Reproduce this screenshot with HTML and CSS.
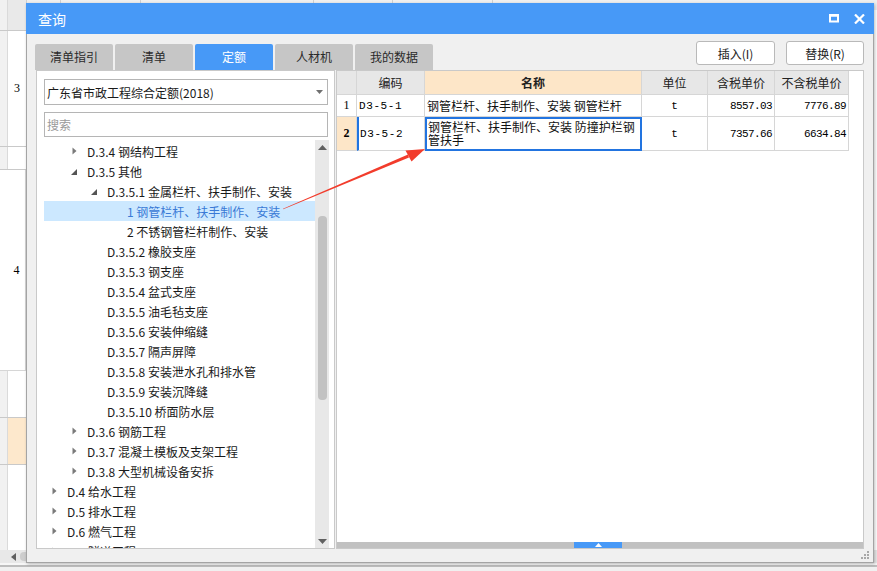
FILE: index.html
```html
<!DOCTYPE html>
<html lang="zh-CN">
<head>
<meta charset="utf-8">
<title>查询</title>
<link rel="stylesheet" href="styles.css">
</head>
<body>
<div class="sheet">
  <div class="sheet-main">
    <div class="sheet-left">
      <div class="srow h"><span class="edge"></span><span class="num"></span></div>
      <div class="srow a"><span class="edge"></span><span class="num">3</span></div>
      <div class="srow b"><span class="edge"></span><span class="num"></span></div>
      <div class="srow c"><span class="edge"></span><span class="num">4</span></div>
      <div class="srow d"><span class="edge"></span><span class="num"></span></div>
      <div class="srow e"><span class="edge"></span><span class="num"></span></div>
      <div class="srow f"><span class="edge"></span><span class="num"></span></div>
    </div>
    <div class="sheet-grid">
      <div class="sheet-head">
        <span class="sh w1"></span><span class="sh w2"></span><span class="sh w3"></span><span class="sh w4"></span><span class="sh w5"></span>
      </div>
    </div>
  </div>
  <div class="sheet-hscroll">
    <svg class="hs-left" width="5" height="8" viewBox="0 0 5 8"><path d="M5 0V8L0 4Z" fill="#606060"/></svg>
    <span class="hs-thumb"></span>
  </div>
  <div class="sheet-status"></div>
</div>

<div class="dialog">
  <div class="titlebar">
    <span class="title">查询</span>
    <span class="tb-icons">
      <svg width="10" height="9" viewBox="0 0 10 9"><rect x="1" y="1.5" width="8" height="6" fill="none" stroke="#fff" stroke-width="2"/><rect x="0" y="0" width="10" height="2.5" fill="#fff"/></svg>
      <svg width="11" height="10" viewBox="0 0 11 10"><path d="M1 0.5L10 9.5M10 0.5L1 9.5" stroke="#fff" stroke-width="2.2"/></svg>
    </span>
  </div>
  <div class="dlg-body">
    <div class="toolbar">
      <div class="tabs">
        <div class="tab">清单指引</div>
        <div class="tab">清单</div>
        <div class="tab active">定额</div>
        <div class="tab">人材机</div>
        <div class="tab">我的数据</div>
      </div>
      <div class="buttons">
        <div class="btn b1">插入(I)</div>
        <div class="btn b2">替换(R)</div>
      </div>
    </div>
    <div class="panels">
      <div class="left-panel">
        <div class="select">
          <span>广东省市政工程综合定额(2018)</span>
          <svg width="7" height="4" viewBox="0 0 7 4"><path d="M0 0H7L3.5 4Z" fill="#707070"/></svg>
        </div>
        <div class="search">搜索</div>
        <div class="tree-wrap">
          <div class="tree">
            <div class="row l2"><span class="tw"><svg width="5" height="8" viewBox="0 0 5 8"><path d="M0.5 0.5L4.5 4L0.5 7.5Z" fill="#7a7a7a"/></svg></span>D.3.4 钢结构工程</div>
            <div class="row l2"><span class="tw ex"><svg width="6" height="6" viewBox="0 0 6 6"><path d="M6 0V6H0Z" fill="#555"/></svg></span>D.3.5 其他</div>
            <div class="row l3"><span class="tw ex"><svg width="6" height="6" viewBox="0 0 6 6"><path d="M6 0V6H0Z" fill="#555"/></svg></span>D.3.5.1 金属栏杆、扶手制作、安装</div>
            <div class="row l4 sel"><span class="tw"></span>1 钢管栏杆、扶手制作、安装</div>
            <div class="row l4"><span class="tw"></span>2 不锈钢管栏杆制作、安装</div>
            <div class="row l3"><span class="tw"></span>D.3.5.2 橡胶支座</div>
            <div class="row l3"><span class="tw"></span>D.3.5.3 钢支座</div>
            <div class="row l3"><span class="tw"></span>D.3.5.4 盆式支座</div>
            <div class="row l3"><span class="tw"></span>D.3.5.5 油毛毡支座</div>
            <div class="row l3"><span class="tw"></span>D.3.5.6 安装伸缩缝</div>
            <div class="row l3"><span class="tw"></span>D.3.5.7 隔声屏障</div>
            <div class="row l3"><span class="tw"></span>D.3.5.8 安装泄水孔和排水管</div>
            <div class="row l3"><span class="tw"></span>D.3.5.9 安装沉降缝</div>
            <div class="row l3"><span class="tw"></span>D.3.5.10 桥面防水层</div>
            <div class="row l2"><span class="tw"><svg width="5" height="8" viewBox="0 0 5 8"><path d="M0.5 0.5L4.5 4L0.5 7.5Z" fill="#7a7a7a"/></svg></span>D.3.6 钢筋工程</div>
            <div class="row l2"><span class="tw"><svg width="5" height="8" viewBox="0 0 5 8"><path d="M0.5 0.5L4.5 4L0.5 7.5Z" fill="#7a7a7a"/></svg></span>D.3.7 混凝土模板及支架工程</div>
            <div class="row l2"><span class="tw"><svg width="5" height="8" viewBox="0 0 5 8"><path d="M0.5 0.5L4.5 4L0.5 7.5Z" fill="#7a7a7a"/></svg></span>D.3.8 大型机械设备安拆</div>
            <div class="row l1"><span class="tw"><svg width="5" height="8" viewBox="0 0 5 8"><path d="M0.5 0.5L4.5 4L0.5 7.5Z" fill="#7a7a7a"/></svg></span>D.4 给水工程</div>
            <div class="row l1"><span class="tw"><svg width="5" height="8" viewBox="0 0 5 8"><path d="M0.5 0.5L4.5 4L0.5 7.5Z" fill="#7a7a7a"/></svg></span>D.5 排水工程</div>
            <div class="row l1"><span class="tw"><svg width="5" height="8" viewBox="0 0 5 8"><path d="M0.5 0.5L4.5 4L0.5 7.5Z" fill="#7a7a7a"/></svg></span>D.6 燃气工程</div>
            <div class="row l1"><span class="tw"><svg width="5" height="8" viewBox="0 0 5 8"><path d="M0.5 0.5L4.5 4L0.5 7.5Z" fill="#7a7a7a"/></svg></span>D.7 隧道工程</div>
          </div>
          <div class="vscroll">
            <div class="vs-btn"><svg width="9" height="5" viewBox="0 0 9 5"><path d="M0 5H9L4.5 0Z" fill="#606060"/></svg></div>
            <div class="vs-thumb"></div>
            <div class="vs-btn down"><svg width="9" height="5" viewBox="0 0 9 5"><path d="M0 0H9L4.5 5Z" fill="#606060"/></svg></div>
          </div>
        </div>
      </div>
      <div class="right-panel">
        <div class="grid">
          <div class="c hd"></div>
          <div class="c hd">编码</div>
          <div class="c hd name-hd">名称</div>
          <div class="c hd">单位</div>
          <div class="c hd">含税单价</div>
          <div class="c hd">不含税单价</div>

          <div class="c no">1</div>
          <div class="c code">D3-5-1</div>
          <div class="c name">钢管栏杆、扶手制作、安装 钢管栏杆</div>
          <div class="c unit">t</div>
          <div class="c price">8557.03</div>
          <div class="c price">7776.89</div>

          <div class="c no cur">2</div>
          <div class="c code cur">D3-5-2</div>
          <div class="c name editing">钢管栏杆、扶手制作、安装 防撞护栏钢管扶手</div>
          <div class="c unit">t</div>
          <div class="c price">7357.66</div>
          <div class="c price">6634.84</div>
        </div>
        <div class="hscroll">
          <div class="hs-btn"><svg width="7" height="4" viewBox="0 0 7 4"><path d="M0 4H7L3.5 0Z" fill="#fff"/></svg></div>
        </div>
      </div>
    </div>
    <svg class="grip" width="8" height="8" viewBox="0 0 8 8">
      <rect x="6" y="0" width="2" height="2" fill="#a8a8a8"/>
      <rect x="3" y="3" width="2" height="2" fill="#a8a8a8"/>
      <rect x="6" y="3" width="2" height="2" fill="#a8a8a8"/>
      <rect x="0" y="6" width="2" height="2" fill="#a8a8a8"/>
      <rect x="3" y="6" width="2" height="2" fill="#a8a8a8"/>
      <rect x="6" y="6" width="2" height="2" fill="#a8a8a8"/>
    </svg>
  </div>
</div>

<svg class="arrow" width="877" height="571" viewBox="0 0 877 571">
  <polygon points="283,208.8 283.2,209.3 409,157.4 408,154.6" fill="#f23c2c"/>
  <polygon points="425,149 405.5,150.5 411.5,161.5" fill="#f23c2c"/>
</svg>
</body>
</html>
```
FILE: styles.css
```css
* { box-sizing: border-box; }
html, body { margin: 0; padding: 0; }
body {
  width: 877px;
  height: 571px;
  overflow: hidden;
  position: relative;
  background: #fff;
  font-family: "Noto Sans CJK SC", "Noto Sans", sans-serif;
  font-size: 12px;
  color: #1a1a1a;
}

/* backdrop spreadsheet */
.sheet { display: flex; flex-direction: column; height: 571px; }
.sheet-main { display: flex; height: 550px; }
.sheet-left { width: 26px; display: flex; flex-direction: column; }
.srow { display: flex; border-bottom: 1px solid #c9c9c9; }
.srow .edge { width: 8px; background: #f1f1f1; border-right: 1px solid #dadada; }
.srow .num {
  flex: 1; display: flex; align-items: center; justify-content: center;
  font-family: "Liberation Serif", serif; font-size: 12px; color: #000; background: #fff;
}
.srow.h { height: 31px; }
.srow.h .num { background: #e9e9e9; }
.srow.a { height: 116px; }
.srow.b { height: 23px; }
.srow.c { height: 201px; }
.srow.d { height: 47px; }
.srow.e { height: 47px; }
.srow.e .num { background: #fde8cc; }
.srow.f { flex: 1; border-bottom: none; }
.sheet-grid { flex: 1; background: #fff; border-left: 1px solid #d0d0d0; }
.sheet-head { display: flex; height: 10px; background: #efefef; }
.sh { border-right: 1px solid #cfcfcf; }
.w1 { width: 34px; } .w2 { width: 80px; } .w3 { width: 173px; } .w4 { width: 79px; } .w5 { width: 100px; }
.sheet-hscroll {
  height: 13px; background: #e8e8e8; display: flex; align-items: center;
  padding-left: 11px; gap: 4px;
}
.hs-thumb { width: 40px; height: 9px; border-radius: 4px; background: #cdcdcd; }
.sheet-status {
  flex: 1;
  background: linear-gradient(#f6f6f6 0 2px, #bdbdbd 2px 4px, #f0f0f0 4px);
}

/* dialog window */
.dialog {
  position: absolute;
  left: 26px; top: 3px;
  width: 848px; height: 560px;
  background: #f0f0f0;
  border: 1px solid #a4a4a4;
  border-top: none;
  box-shadow: 1px 1px 3px rgba(0,0,0,.25);
  display: flex; flex-direction: column;
}
.titlebar {
  height: 32px; background: #4799f7; margin: 0 -1px;
  display: flex; align-items: center; padding: 0 9px 0 12px; color: #fff;
}
.title { flex: 1; font-size: 14px; }
.tb-icons { display: flex; align-items: center; gap: 15px; }

.dlg-body {
  flex: 1; display: flex; flex-direction: column;
  padding: 0 9px 13px 8px; position: relative;
}
.toolbar { height: 36px; display: flex; justify-content: space-between; align-items: flex-end; }
.tabs { display: flex; gap: 2px; }
.tab {
  width: 78px; height: 26px; background: #c6c6c6; border-radius: 2px 2px 0 0;
  text-align: center; line-height: 26px; color: #2a2a2a;
}
.tab.active { background: #4799f7; color: #fff; }
.buttons { display: flex; gap: 11px; margin-bottom: 5px; }
.btn {
  height: 24px; background: #fff; border: 1px solid #b9b9b9; border-radius: 3px;
  display: flex; align-items: center; justify-content: center; color: #222;
}
.b1 { width: 79px; }
.b2 { width: 78px; }

.panels { height: 479px; display: flex; gap: 1px; padding-left: 1px; }

.left-panel {
  width: 299px; background: #fff; border: 1px solid #c9c9c9;
  display: flex; flex-direction: column; padding: 8px 0 0 7px;
}
.select {
  width: 284px; height: 26px; border: 1px solid #b5b5b5;
  display: flex; align-items: center; justify-content: space-between;
  padding: 0 4px 0 2px; color: #1a1a1a;
}
.search {
  width: 284px; height: 25px; border: 1px solid #b5b5b5; margin-top: 7px;
  display: flex; align-items: center; padding-left: 2px; color: #9a9a9a;
}
.tree-wrap { margin-top: 3px; flex: 1; min-height: 0; width: 285px; display: flex; overflow: hidden; }
.tree { width: 271px; padding-top: 1px; overflow: hidden; }
.row { height: 20px; display: flex; align-items: center; white-space: nowrap; color: #1a1a1a; }
.row.l1 { padding-left: 8px; }
.row.l2 { padding-left: 28px; }
.row.l3 { padding-left: 48px; }
.row.l4 { padding-left: 68px; }
.row.sel { background: #cce8ff; color: #3a7ad6; }
.tw { width: 15px; flex: none; display: flex; align-items: center; }
.tw.ex { padding-top: 2px; margin-left: -1px; margin-right: 1px; }
.vscroll { width: 14px; background: #e8e8e8; display: flex; flex-direction: column; align-items: center; }
.vs-btn { height: 14px; width: 14px; display: flex; align-items: center; justify-content: center; }
.vs-btn.down { margin-top: auto; }
.vs-thumb { width: 9px; height: 184px; margin-top: 62px; background: #c2c2c2; border-radius: 4px; }

.right-panel {
  width: 528px; background: #fff; border: 1px solid #c9c9c9;
  display: flex; flex-direction: column;
}
.grid {
  display: grid;
  grid-template-columns: 20px 68px 217px 66px 67px 74px;
  grid-template-rows: 24px 22px 34px;
  width: 512px;
}
.c {
  border-right: 1px solid #d6d6d6; border-bottom: 1px solid #d6d6d6;
  display: flex; align-items: center; overflow: hidden; white-space: nowrap;
}
.hd { background: #e7e7e7; justify-content: center; color: #222; }
.name-hd { background: #fde6c8; font-weight: bold; }
.no { justify-content: center; font-family: "Liberation Serif", serif; font-size: 12px; color: #000; }
.no.cur { background: #fde6c8; font-weight: bold; }
.code { padding-left: 2px; font-family: "Liberation Mono", monospace; font-size: 11px; letter-spacing: 0.6px; color: #000; }
.code.cur { border-left: 2px solid #2274e0; padding-left: 1px; }
.name { padding-left: 2px; color: #111; }
.name.editing {
  border: 2px solid #2274e0; display: block; white-space: normal; word-break: break-all;
  line-height: 13px; padding: 1px 0 0 1px;
}
.unit { justify-content: center; font-family: "Liberation Mono", monospace; font-size: 11px; color: #000; }
.price {
  justify-content: flex-end; padding-right: 2px;
  font-family: "Liberation Mono", monospace; font-size: 11px; letter-spacing: -0.6px; color: #000;
}
.hscroll { margin-top: auto; height: 6px; background: #c1c1c1; display: flex; }
.hs-btn {
  margin-left: 237px; width: 48px; background: #4799f7;
  display: flex; align-items: center; justify-content: center;
}
.grip { position: absolute; right: 4px; bottom: 3px; }

.arrow { position: absolute; left: 0; top: 0; pointer-events: none; }
```
